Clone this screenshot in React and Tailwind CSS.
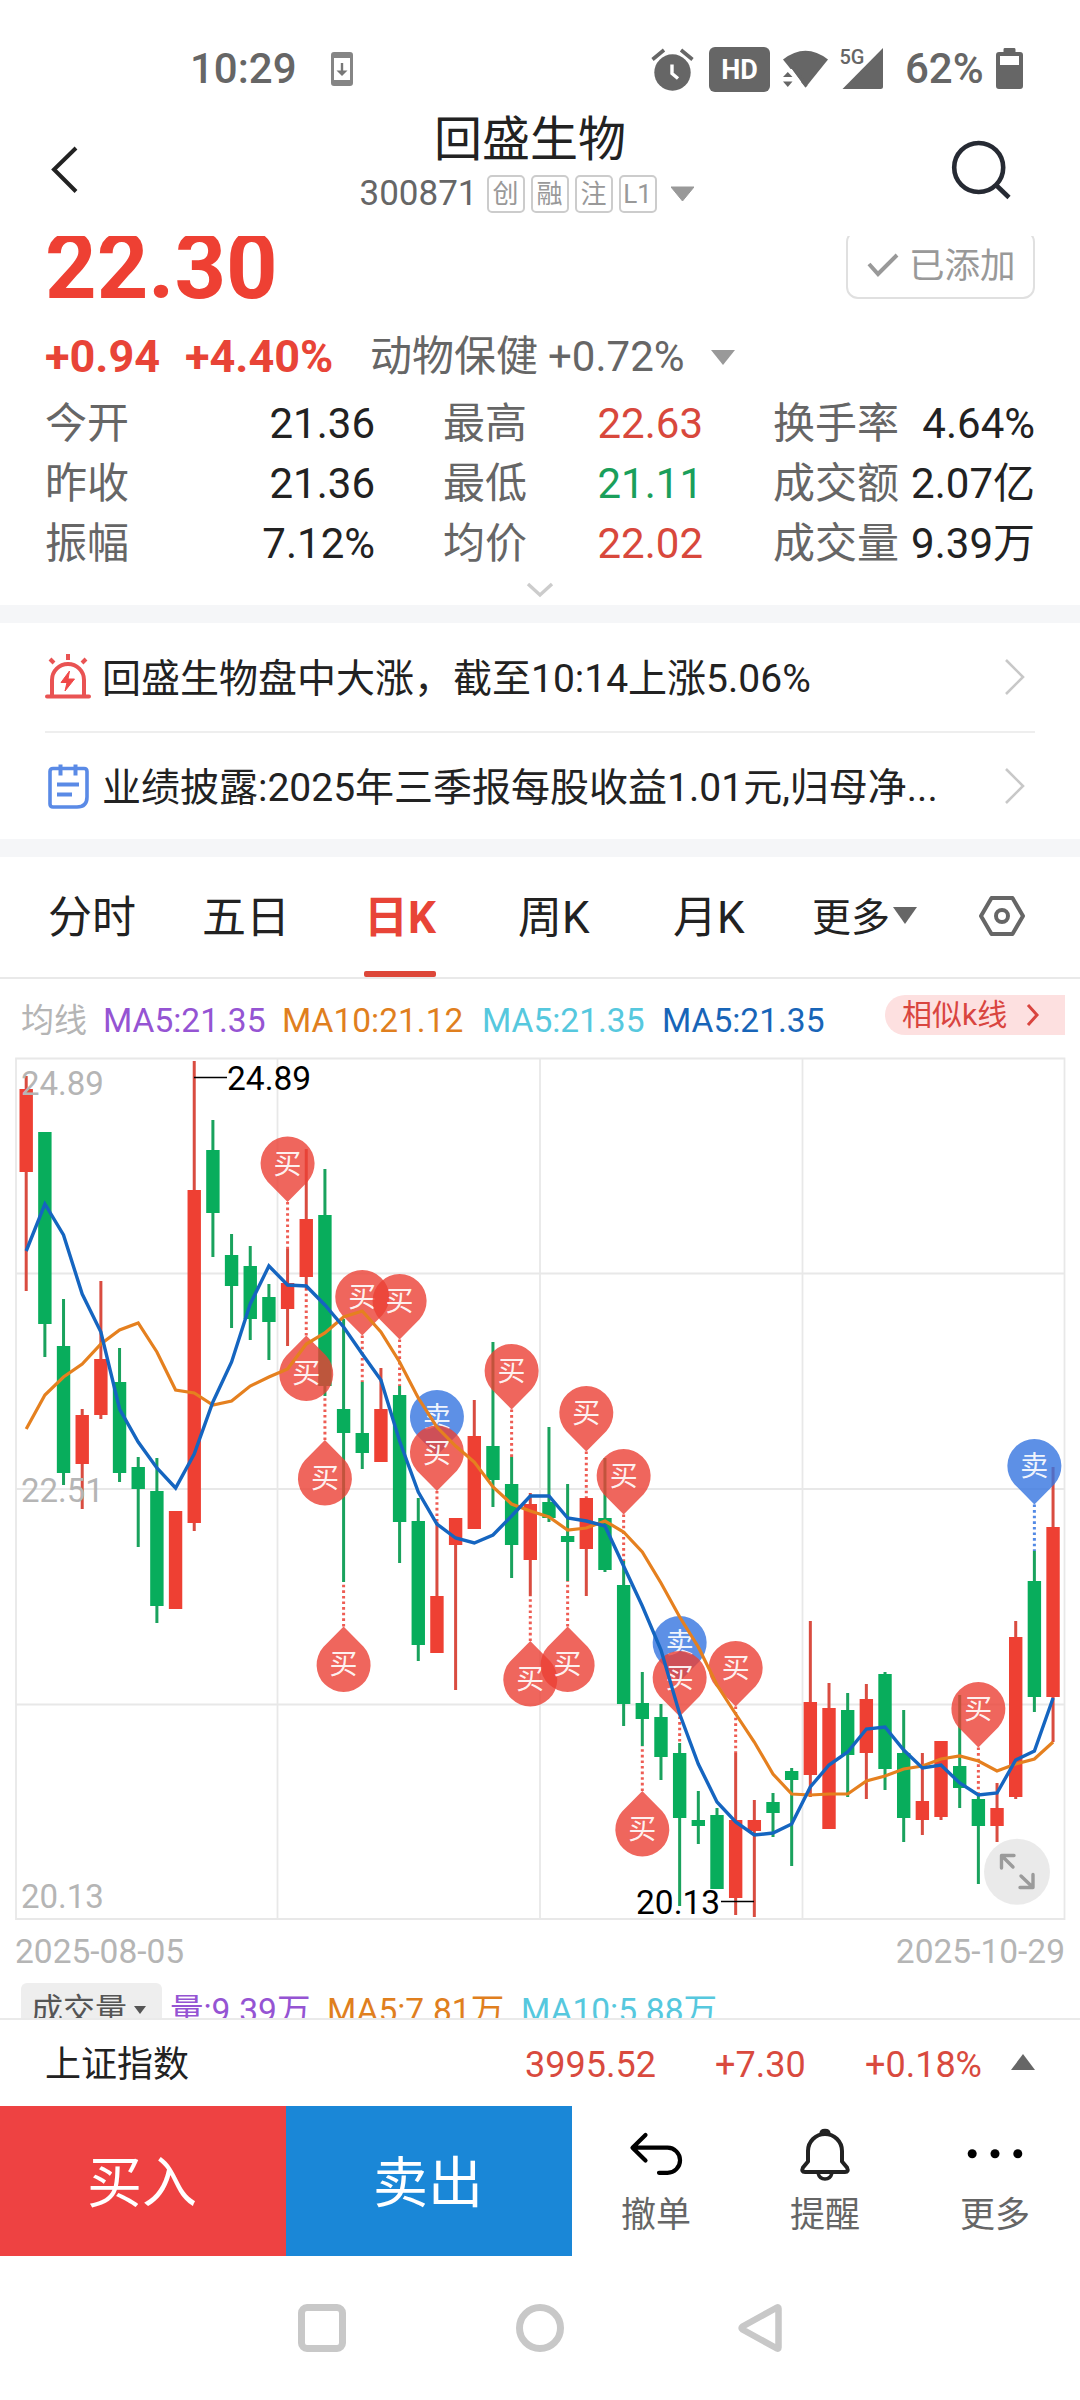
// Daily candles: [direction, high, body top, body bottom, low] in canvas units
const CANDLES = [
  ['u', 1076, 1089, 1172, 1291],
  ['d', 1132, 1132, 1324, 1357],
  ['d', 1299, 1346, 1473, 1485],
  ['u', 1409, 1415, 1464, 1509],
  ['u', 1281, 1359, 1415, 1419],
  ['d', 1348, 1382, 1473, 1482],
  ['d', 1457, 1467, 1489, 1547],
  ['d', 1458, 1491, 1606, 1623],
  ['u', 1511, 1511, 1609, 1609],
  ['u', 1061, 1190, 1523, 1531],
  ['d', 1120, 1150, 1213, 1257],
  ['d', 1234, 1255, 1286, 1328],
  ['d', 1246, 1266, 1319, 1340],
  ['d', 1284, 1297, 1322, 1360],
  ['u', 1249, 1283, 1309, 1346],
  ['u', 1149, 1219, 1277, 1290],
  ['d', 1169, 1215, 1386, 1396],
  ['d', 1319, 1409, 1433, 1582],
  ['d', 1382, 1433, 1453, 1469],
  ['u', 1368, 1409, 1462, 1462],
  ['d', 1386, 1395, 1522, 1563],
  ['d', 1498, 1521, 1645, 1661],
  ['u', 1522, 1596, 1653, 1653],
  ['u', 1518, 1518, 1545, 1690],
  ['u', 1400, 1436, 1529, 1529],
  ['d', 1342, 1446, 1480, 1507],
  ['d', 1457, 1484, 1545, 1578],
  ['u', 1493, 1504, 1560, 1596],
  ['d', 1427, 1502, 1518, 1522],
  ['d', 1484, 1536, 1542, 1581],
  ['u', 1498, 1498, 1549, 1596],
  ['d', 1458, 1518, 1570, 1572],
  ['d', 1561, 1585, 1704, 1726],
  ['d', 1672, 1703, 1719, 1746],
  ['d', 1704, 1717, 1757, 1780],
  ['d', 1743, 1753, 1818, 1906],
  ['d', 1791, 1820, 1826, 1844],
  ['d', 1808, 1815, 1889, 1889],
  ['u', 1753, 1820, 1898, 1915],
  ['u', 1800, 1820, 1831, 1917],
  ['d', 1793, 1802, 1813, 1837],
  ['d', 1768, 1771, 1780, 1866],
  ['u', 1621, 1702, 1775, 1797],
  ['u', 1683, 1708, 1829, 1829],
  ['d', 1693, 1710, 1755, 1797],
  ['u', 1684, 1699, 1753, 1799],
  ['d', 1672, 1674, 1769, 1790],
  ['d', 1710, 1753, 1818, 1842],
  ['u', 1753, 1801, 1820, 1835],
  ['u', 1741, 1741, 1817, 1820],
  ['d', 1695, 1766, 1788, 1808],
  ['d', 1795, 1799, 1826, 1884],
  ['u', 1783, 1808, 1826, 1842],
  ['u', 1621, 1637, 1797, 1799],
  ['d', 1551, 1581, 1697, 1712],
  ['u', 1467, 1527, 1697, 1742],
];

const MA5 = [
  1251, 1204, 1235, 1294, 1332, 1409, 1442, 1468, 1488, 1454, 1402, 1362, 1304, 1266, 1285, 1286,
  1305, 1327, 1354, 1380, 1441, 1492, 1524, 1538, 1543, 1535, 1516, 1496, 1496, 1518, 1521, 1526,
  1566, 1606, 1650, 1714, 1764, 1802, 1822, 1835, 1833, 1824, 1787, 1765, 1752, 1729, 1727, 1750,
  1768, 1765, 1783, 1795, 1793, 1760, 1751, 1698,
];

const MA10 = [
  1429, 1395, 1377, 1364, 1344, 1330, 1323, 1352, 1390, 1393, 1405, 1401, 1386, 1377, 1369, 1344,
  1333, 1317, 1311, 1332, 1362, 1398, 1427, 1446, 1462, 1487, 1504, 1511, 1517, 1530, 1528, 1521,
  1532, 1552, 1583, 1617, 1647, 1685, 1714, 1742, 1774, 1794, 1795, 1794, 1794, 1781, 1776, 1769,
  1766, 1759, 1756, 1761, 1771, 1764, 1759, 1742,
];

// Trade pins: tip is the point of the drop, end is where the dotted line meets the candle
const PINS = [
  { i: 14, type: 'buy', tip: 1202, end: 1249 },
  { i: 15, type: 'buy', tip: 1335.5, end: 1290, up: true },
  { i: 16, type: 'buy', tip: 1440, end: 1396, up: true },
  { i: 17, type: 'buy', tip: 1626.5, end: 1582, up: true },
  { i: 18, type: 'buy', tip: 1335.5, end: 1382 },
  { i: 20, type: 'buy', tip: 1339.5, end: 1386 },
  { i: 22, type: 'sell', tip: 1455.5, end: 1455.5 },
  { i: 22, type: 'buy', tip: 1491, end: 1522 },
  { i: 26, type: 'buy', tip: 1409.5, end: 1457 },
  { i: 27, type: 'buy', tip: 1641, end: 1596, up: true },
  { i: 29, type: 'buy', tip: 1626.5, end: 1581, up: true },
  { i: 30, type: 'buy', tip: 1451.5, end: 1498 },
  { i: 32, type: 'buy', tip: 1514.5, end: 1561 },
  { i: 33, type: 'buy', tip: 1791, end: 1746, up: true },
  { i: 35, type: 'sell', tip: 1681.5, end: 1681.5 },
  { i: 35, type: 'buy', tip: 1716.5, end: 1743 },
  { i: 38, type: 'buy', tip: 1706.5, end: 1753 },
  { i: 51, type: 'buy', tip: 1747.5, end: 1793 },
  { i: 54, type: 'sell', tip: 1504.5, end: 1551 },
];

const STATS = [
  ['今开', '21.36', '最高', '22.63', 'text-[#d8483c]', '换手率', '4.64%'],
  ['昨收', '21.36', '最低', '21.11', 'text-[#1a9f5b]', '成交额', '2.07亿'],
  ['振幅', '7.12%', '均价', '22.02', 'text-[#d8483c]', '成交量', '9.39万'],
];

const cx = (i) => 26.2 + i * 18.67;
const toPoints = (list) => list.map((y, i) => `${cx(i).toFixed(1)},${y}`).join(' ');

function StatusBar() {
  return (
    <div className="flex h-[104px] shrink-0 items-start pt-[44px] text-[42px] font-medium leading-[50px] text-[#666]">
      <span className="ml-[190px] w-[141px]">10:29</span>
      <svg className="mt-[7px] h-[36px] w-[22px]" viewBox="0 0 22 36" fill="none">
        <rect x="1.5" y="2.5" width="19" height="31" rx="1.5" stroke="#858585" strokeWidth="3" />
        <path d="M1 4h20v3H1zM1 29h20v4H1z" fill="#858585" />
        <path d="M11 12v9" stroke="#777" strokeWidth="2.4" />
        <path d="M5.500 19.500h11L11 25z" fill="#777" />
      </svg>
      <svg className="ml-[297px] h-[48px] w-[246px]" viewBox="650 44 246 48">
        <circle cx="672.500" cy="72.500" r="18.200" fill="#666" />
        <path d="M652.500 59.500l11.500-9.500M692.500 59.500L681 50" stroke="#666" strokeWidth="3.600" />
        <path d="M672 64.500v9l6 5" stroke="#fff" strokeWidth="3.400" fill="none" />
        <rect x="709" y="47" width="61" height="45" rx="6" fill="#666" />
        <text x="739.500" y="78.500" fontSize="27" fontWeight="700" fill="#fff" textAnchor="middle">HD</text>
        <path d="M783 59.500Q805.500 42 828 59.500L805.500 87.500z" fill="#666" />
        <path d="M780 69l12 0 9 12 0 10-21 0z" fill="#fff" />
        <path d="M792 69l13.500 18.500 2-2-12-18z" fill="#666" />
        <path d="M783 77h9.500l-4.700-5zM783 81.500h9.500l-4.700 5.500z" fill="#666" />
        <path d="M883 48v38.500q0 2.500-2.500 2.500H842.500z" fill="#666" />
        <text x="839.500" y="63.500" fontSize="20" fontWeight="500" fill="#666">5G</text>
      </svg>
      <span className="ml-[9px] w-[91px] whitespace-nowrap">62%</span>
      <svg className="mt-[4px] h-[41px] w-[27px]" viewBox="0 0 27 41">
        <path d="M8.500 0h10q1 0 1 1.500V4H24q3 0 3 3v31q0 3-3 3H3q-3 0-3-3V7q0-3 3-3h4.500V1.500Q7.500 0 8.500 0z" fill="#666" />
        <rect x="4" y="8" width="19" height="9" fill="#fff" />
      </svg>
    </div>
  );
}

function Header() {
  return (
    <div className="flex h-[132px] shrink-0 justify-between">
      <svg className="ml-[48px] mt-[38px] h-[56px] w-[36px]" viewBox="48 142 36 56" fill="none">
        <path d="M76 148L54 169.500 76 191.500" stroke="#222" strokeWidth="4" />
      </svg>
      <div className="flex flex-col items-center pl-[28px]">
        <div className="mt-[6px] text-[48px] leading-[60px] text-[#222]">回盛生物</div>
        <div className="mt-[3px] flex h-[42px] items-center pr-[7px] text-[#666]">
          <span className="mr-[9px] text-[35px] leading-[42px]">300871</span>
          <div className="flex gap-[6px] text-[26px] leading-[35px] text-[#999]">
            {['创', '融', '注', 'L1'].map((tag) => (
              <span key={tag} className="h-[38px] w-[38px] rounded-[5px] border-2 border-[#ccc] text-center">
                {tag}
              </span>
            ))}
          </div>
          <svg className="ml-[14px] h-[16px] w-[23px]" viewBox="0 0 23 16">
            <path d="M0 1h23L11.500 15z" fill="#999" stroke="#999" strokeLinejoin="round" />
          </svg>
        </div>
      </div>
      <svg className="mr-[66px] mt-[34px] h-[66px] w-[66px]" viewBox="948 138 66 66" fill="none">
        <circle cx="978.700" cy="167.500" r="24.500" stroke="#262a33" strokeWidth="4.600" />
        <path d="M996 185l13 12.500" stroke="#262a33" strokeWidth="4.600" />
      </svg>
    </div>
  );
}

function Quote() {
  return (
    <div className="h-[369px] shrink-0 overflow-hidden pl-[45px] pr-[45px]">
      <div className="flex h-[63px] justify-between">
        <span className="text-[90px] font-bold leading-[64px] text-[#ee4033]">22.30</span>
        <div className="-mt-[6px] flex h-[69px] w-[189px] items-center rounded-[12px] border-2 border-[#e0e0e0] pl-[18px] text-[#999]">
          <svg className="mt-[1px] h-[26px] w-[34px]" viewBox="0 0 34 26" fill="none">
            <path d="M3 12l9 10L31 3" stroke="#999" strokeWidth="4" />
          </svg>
          <span className="ml-[9px] mt-[2px] whitespace-nowrap text-[35.5px] leading-[48px]">已添加</span>
        </div>
      </div>
      <div className="mt-[28px] flex h-[60px] items-center whitespace-nowrap text-[42px] leading-[60px] text-[#666]">
        <span className="w-[140px] text-[45px] font-bold text-[#e84437]">+0.94</span>
        <span className="w-[185px] text-[45px] font-bold text-[#e84437]">+4.40%</span>
        <span>动物保健</span>
        <span className="ml-[10px]">+0.72%</span>
        <svg className="ml-[26px] h-[15px] w-[24px]" viewBox="0 0 24 15">
          <path d="M0 0h24L12 15z" fill="#999" />
        </svg>
      </div>
      <div className="mt-[7px] whitespace-nowrap text-[42px] leading-[60px] text-[#222]">
        {STATS.map(([a, av, b, bv, tone, c, cv]) => (
          <div key={a} className="grid h-[60px] grid-cols-[330px_68px_260px_70px_262px]">
            <div className="flex justify-between">
              <span className="text-[#666]">{a}</span>
              <span>{av}</span>
            </div>
            <div />
            <div className="flex">
              <span className="w-[155px] text-[#666]">{b}</span>
              <span className={tone}>{bv}</span>
            </div>
            <div />
            <div className="flex justify-between">
              <span className="text-[#666]">{c}</span>
              <span>{cv}</span>
            </div>
          </div>
        ))}
      </div>
      <svg className="mx-auto mt-[7px] h-[18px] w-[30px]" viewBox="0 0 30 18" fill="none">
        <path d="M3 3l12 11L27 3" stroke="#ccc" strokeWidth="3.400" />
      </svg>
    </div>
  );
}

function Arrow() {
  return (
    <svg className="ml-auto mr-[8px] h-[38px] w-[24px]" viewBox="0 0 24 38" fill="none">
      <path d="M3 2l17 17L3 36" stroke="#c8c8c8" strokeWidth="2.600" />
    </svg>
  );
}

function Notices() {
  return (
    <div className="h-[216px] shrink-0 whitespace-nowrap px-[45px] text-[39px] leading-[54px] text-[#222]">
      <div className="flex h-[110px] items-center border-b-2 border-[#eee]">
        <svg className="h-[48px] w-[46px]" viewBox="0 0 46 48" fill="none" stroke="#e95353" strokeWidth="4">
          <path d="M2 43.500h42" strokeLinecap="round" />
          <path d="M7 43V27a16 16 0 0 1 32 0v16" />
          <path d="M23 1v6M5 6l4 4M41 6l-4 4" />
          <path d="M24.500 18L16 29.500h6L20 38l9.500-12h-6.500z" fill="#f04848" stroke="#f04848" strokeWidth="1" />
        </svg>
        <span className="ml-[11px] pt-[3px]">回盛生物盘中大涨，截至10:14上涨5.06%</span>
        <Arrow />
      </div>
      <div className="flex h-[106px] items-center">
        <svg className="h-[48px] w-[46px]" viewBox="0 0 46 48" fill="none" stroke="#5a8ae6" strokeWidth="3.600">
          <path d="M8 6.500h31q3 0 3 3V35q0 10-10 10H8q-3 0-3-3V9.500q0-3 3-3z" strokeLinejoin="round" />
          <path d="M15.500 2.500v11M30.500 2.500v11" strokeWidth="4" />
          <path d="M12 22.500h22M12 32.500h15" strokeWidth="4" />
        </svg>
        <span className="ml-[11px] pt-[3px]">业绩披露:2025年三季报每股收益1.01元,归母净...</span>
        <Arrow />
      </div>
    </div>
  );
}

function Tabs() {
  return (
    <div className="flex h-[122px] shrink-0 items-stretch whitespace-nowrap border-b-2 border-[#e9e9e9] pl-[48px] text-[44px] leading-[123px] text-[#222]">
      <span className="w-[154px]">分时</span>
      <span className="w-[162px]">五日</span>
      <span className="flex w-[72px] flex-col items-center font-bold text-[#e84437]">
        <span className="h-[114px]">日K</span>
        <span className="h-[6px] w-[72px] rounded-[2px] bg-[#dd4739]" />
      </span>
      <span className="ml-[82px] w-[155px]">周K</span>
      <span className="w-[139px]">月K</span>
      <span className="text-[39px]">更多</span>
      <svg className="ml-[3px] mt-[50px] h-[17px] w-[24px]" viewBox="0 0 24 17">
        <path d="M0 0h24L12 17z" fill="#666" />
      </svg>
      <svg className="ml-[61px] mt-[38px] h-[42px] w-[48px]" viewBox="0 0 48 42" fill="none" stroke="#666" strokeWidth="4">
        <path d="M13.500 3h21L45 21 34.500 39h-21L3 21z" strokeLinejoin="round" />
        <circle cx="24" cy="21" r="6" />
      </svg>
    </div>
  );
}

function Averages() {
  return (
    <div className="flex h-[71px] shrink-0 items-start whitespace-nowrap pl-[21px] pt-[22px] text-[33.5px] leading-[40px]">
      <span className="w-[82px] text-[33px] text-[#b5b5b5]">均线</span>
      <span className="w-[179px] text-[#9554d3]">MA5:21.35</span>
      <span className="w-[200px] text-[#e07f1e]">MA10:21.12</span>
      <span className="w-[180px] text-[#56c8de]">MA5:21.35</span>
      <span className="text-[#1865b8]">MA5:21.35</span>
      <div className="-mt-[6px] ml-auto mr-[15px] flex h-[40px] w-[180px] items-center rounded-l-full bg-[#fde0e0] pl-[17px] text-[30px] leading-[42px] text-[#d9453f]">
        相似k线
        <svg className="ml-[19px] h-[24px] w-[14px]" viewBox="0 0 14 24" fill="none">
          <path d="M2 2l9 10-9 10" stroke="#d9453f" strokeWidth="3" />
        </svg>
      </div>
    </div>
  );
}

function Pin({ pin }) {
  const x = cx(pin.i);
  const dir = pin.up ? 1 : -1;
  const color = pin.type === 'buy' ? '#eb4035' : '#3474e0';
  const center = pin.tip + dir * 38.5;
  return (
    <g>
      <line x1={x} x2={x} y1={pin.tip} y2={pin.end} stroke={color} strokeWidth="3" strokeDasharray="2.6 3" opacity="0.85" />
      <path
        d="M0 38.500L-20 18.200A27 27 0 1 1 20 18.200z"
        transform={`translate(${x} ${center}) scale(1 ${-dir})`}
        fill={color}
        fillOpacity="0.8"
      />
      <text x={x} y={center + (pin.up ? 9 : 10)} fontSize="28" textAnchor="middle" fill="#fff" fillOpacity="0.92">
        {pin.type === 'buy' ? '买' : '卖'}
      </text>
    </g>
  );
}

function Chart() {
  return (
    <svg className="h-[880px] w-[1080px] shrink-0" viewBox="0 1050 1080 880" fill="none">
      <path
        d="M16 1058.500H1064.500V1919H16zM16 1273.500H1064M16 1489H1064M16 1704.500H1064M277.500 1058V1919M540 1058V1919M802.500 1058V1919"
        stroke="#e8e8e8"
        strokeWidth="1.800"
      />
      {CANDLES.map(([dir, high, top, bottom, low], i) => (
        <g key={i} fill={dir === 'u' ? '#ee4033' : '#08ad5c'}>
          <rect x={cx(i) - 1.5} y={high} width="3" height={low - high} fill={dir === 'u' ? '#d94c40' : '#1aa25d'} />
          <rect x={cx(i) - 6.7} y={top} width="13.4" height={bottom - top} />
        </g>
      ))}
      {PINS.map((pin) => (
        <Pin key={`${pin.i}-${pin.type}`} pin={pin} />
      ))}
      <polyline points={toPoints(MA10)} stroke="#e5801f" strokeWidth="3.200" />
      <polyline points={toPoints(MA5)} stroke="#1565c0" strokeWidth="3.400" />
      <g fontSize="33" fill="#b5b5b5">
        <text x="21" y="1095">24.89</text>
        <text x="21" y="1501.500">22.51</text>
        <text x="21" y="1908">20.13</text>
      </g>
      <g fontSize="33.500" fill="#000">
        <text x="227" y="1090">24.89</text>
        <text x="636" y="1913.500">20.13</text>
      </g>
      <path d="M194 1077.500H227M721 1901.500H754" stroke="#000" strokeWidth="1.400" />
      <circle cx="1017" cy="1871.800" r="33" fill="#e9e9e9" fillOpacity="0.95" />
      <g stroke="#9b9b9b" strokeWidth="3.400" strokeLinejoin="round" strokeLinecap="round">
        <path d="M1001.500 1868V1855.500H1014M1002 1856L1013 1867" />
        <path d="M1033 1874.500V1887.500H1020M1032.500 1887L1021 1876" />
      </g>
    </svg>
  );
}

function Volume() {
  return (
    <div className="h-[88px] shrink-0 overflow-hidden whitespace-nowrap text-[33.5px]">
      <div className="flex h-[53px] justify-between px-[15px] leading-[44px] text-[#b5b5b5]">
        <span>2025-08-05</span>
        <span>2025-10-29</span>
      </div>
      <div className="flex pl-[21px] leading-[55px]">
        <div className="flex h-[54px] w-[141px] items-center rounded-[6px] bg-[#eee] pl-[10px] text-[32px] text-[#555]">
          成交量
          <svg className="ml-[7px] h-[8px] w-[12px]" viewBox="0 0 12 8">
            <path d="M0 0h12L6 8z" fill="#555" />
          </svg>
        </div>
        <span className="ml-[8px] w-[157px] text-[#9554d3]">量:9.39万</span>
        <span className="w-[194px] text-[#e07f1e]">MA5:7.81万</span>
        <span className="text-[#56c8de]">MA10:5.88万</span>
      </div>
    </div>
  );
}

function IndexBar() {
  return (
    <div className="flex h-[88px] shrink-0 items-center whitespace-nowrap border-t-2 border-[#eaeaea] pl-[45px] pt-[4px] text-[36px] leading-[50px] text-[#d94a3e]">
      <span className="w-[480px] text-[#222]">上证指数</span>
      <span className="w-[190px]">3995.52</span>
      <span className="w-[150px]">+7.30</span>
      <span className="w-[146px]">+0.18%</span>
      <svg className="-mt-[6px] h-[16px] w-[24px]" viewBox="0 0 24 16">
        <path d="M0 16h24L12 0z" fill="#666" />
      </svg>
    </div>
  );
}

function Actions() {
  return (
    <div className="flex h-[150px] shrink-0 text-[35px] leading-[44px] text-[#666]">
      <button className="w-[286px] bg-[#ee4242] pt-[4px] pr-[2px] text-[55px] leading-[146px] text-white">买入</button>
      <button className="w-[286px] bg-[#1a87d7] pt-[4px] pr-[2px] text-[55px] leading-[146px] text-white">卖出</button>
      <div className="grid grid-cols-[168px_170px_170px] pt-[20px]">
        <div className="flex flex-col items-center">
          <svg className="h-[60px] w-[60px]" viewBox="626 2126 60 60" fill="none" stroke="#000" strokeWidth="4.200" strokeLinecap="round" strokeLinejoin="round">
            <path d="M645.500 2135L632.500 2147.700 645.500 2160.500M633 2147.700H667.500A12.500 12.500 0 0 1 667.500 2172.800H659" />
          </svg>
          <span className="mt-[8px]">撤单</span>
        </div>
        <div className="flex flex-col items-center">
          <svg className="h-[60px] w-[60px]" viewBox="794.500 2126 60 60" fill="none" stroke="#222" strokeWidth="4" strokeLinejoin="round">
            <path d="M807.500 2151A17 17 0 0 1 841.500 2151V2161.500L846.500 2167.500Q848.500 2172 844.500 2172H804.500Q800.500 2172 802.500 2167.500L807.500 2161.500z" />
            <path d="M820.500 2134Q820.500 2130.500 824.500 2130.500T828.500 2134M817.500 2173Q819 2179 824.500 2179T831.500 2173" strokeWidth="3.400" />
          </svg>
          <span className="mt-[8px]">提醒</span>
        </div>
        <div className="flex flex-col items-center">
          <svg className="h-[60px] w-[60px]" viewBox="965 2126 60 60">
            <circle cx="972.200" cy="2153.700" r="4.500" />
            <circle cx="995" cy="2153.700" r="4.500" />
            <circle cx="1017.800" cy="2153.700" r="4.500" />
          </svg>
          <span className="mt-[8px]">更多</span>
        </div>
      </div>
    </div>
  );
}

function NavBar() {
  return (
    <div className="flex flex-1 items-start pt-[48px]">
      <div className="ml-[298px] h-[48px] w-[48px] rounded-[9px] border-[7px] border-[#c8c8c8]" />
      <div className="ml-[170px] h-[48px] w-[48px] rounded-full border-[7px] border-[#c8c8c8]" />
      <svg className="ml-[174px] h-[48px] w-[44px]" viewBox="0 0 44 48" fill="none">
        <path d="M40.500 4.500v39Q40.500 45 39 44.500L4.500 25.500Q2.500 24 4.500 22.500L39 3.500Q40.500 3 40.500 4.500z" stroke="#c8c8c8" strokeWidth="6.500" strokeLinejoin="round" />
      </svg>
    </div>
  );
}

export default function App() {
  return (
    <div className="flex h-[2400px] w-[1080px] flex-col overflow-hidden bg-white font-[Roboto,'Noto_Sans_CJK_SC',sans-serif]">
      <StatusBar />
      <Header />
      <Quote />
      <div className="h-[18px] shrink-0 bg-[#f5f6f8]" />
      <Notices />
      <div className="h-[18px] shrink-0 bg-[#f5f6f8]" />
      <Tabs />
      <Averages />
      <Chart />
      <Volume />
      <IndexBar />
      <Actions />
      <NavBar />
    </div>
  );
}
